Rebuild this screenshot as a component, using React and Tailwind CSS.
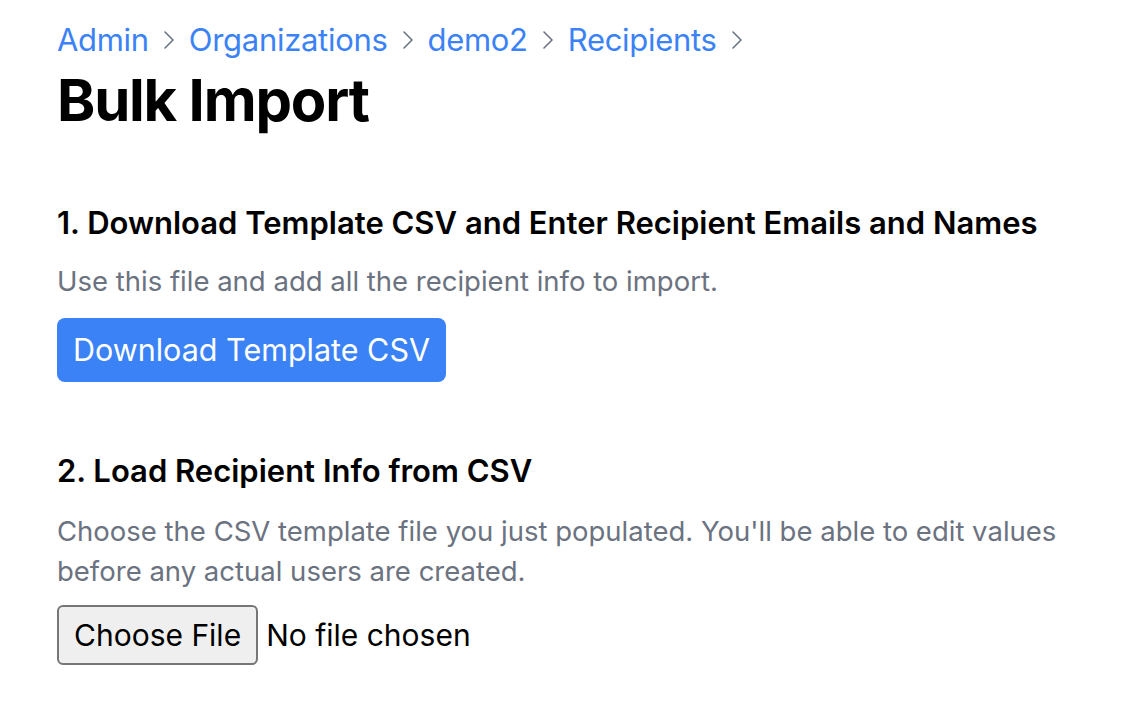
import React from 'react';

function Chevron() {
  return (
    <svg width="14" height="22" viewBox="0 0 14 22" className="mx-[13px] text-gray-500" fill="none">
      <path d="M3 3 L11 11 L3 19" stroke="currentColor" strokeWidth="1.6" strokeLinecap="round" strokeLinejoin="round" />
    </svg>
  );
}

function App() {
  const crumbs = ['Admin', 'Organizations', 'demo2', 'Recipients'];

  return (
    <div className="min-h-screen bg-white px-[57px] pt-[18px] font-['Inter',sans-serif] text-black">
      {/* Breadcrumb */}
      <nav className="flex items-center text-[31px] leading-[44px] text-[#3b82f6]">
        {crumbs.map((c) => (
          <React.Fragment key={c}>
            <a href="#" className="tracking-[-0.3px]">{c}</a>
            <Chevron />
          </React.Fragment>
        ))}
      </nav>
      <h1 className="mt-[6px] text-[58px] font-bold leading-[64px] tracking-[-1.2px]">Bulk Import</h1>

      {/* Step 1 */}
      <section className="mt-[71px]">
        <h2 className="text-[31px] font-semibold leading-[40px]">
          1. Download Template CSV and Enter Recipient Emails and Names
        </h2>
        <p className="mt-[18px] text-[27.5px] leading-[40px] text-[#6b7280]">
          Use this file and add all the recipient info to import.
        </p>
        <button className="mt-[17px] h-[64px] rounded-[8px] bg-[#3b82f6] px-[16px] text-[30.5px] text-white">
          Download Template CSV
        </button>
      </section>

      {/* Step 2 */}
      <section className="mt-[69px]">
        <h2 className="text-[31px] font-semibold leading-[40px]">
          2. Load Recipient Info from CSV
        </h2>
        <p className="mt-[20px] w-[1010px] text-[27.5px] leading-[40px] text-[#6b7280]">
          Choose the CSV template file you just populated. You'll be able to edit values before any actual users are created.
        </p>
        <div className="mt-[14px] flex items-center">
          <button className="h-[60px] rounded-[6px] border-2 border-[#767676] bg-[#efefef] px-[15px] text-[30px] text-black">
            Choose File
          </button>
          <span className="ml-[8px] text-[30px]">No file chosen</span>
        </div>
      </section>
    </div>
  );
}

export default App;
